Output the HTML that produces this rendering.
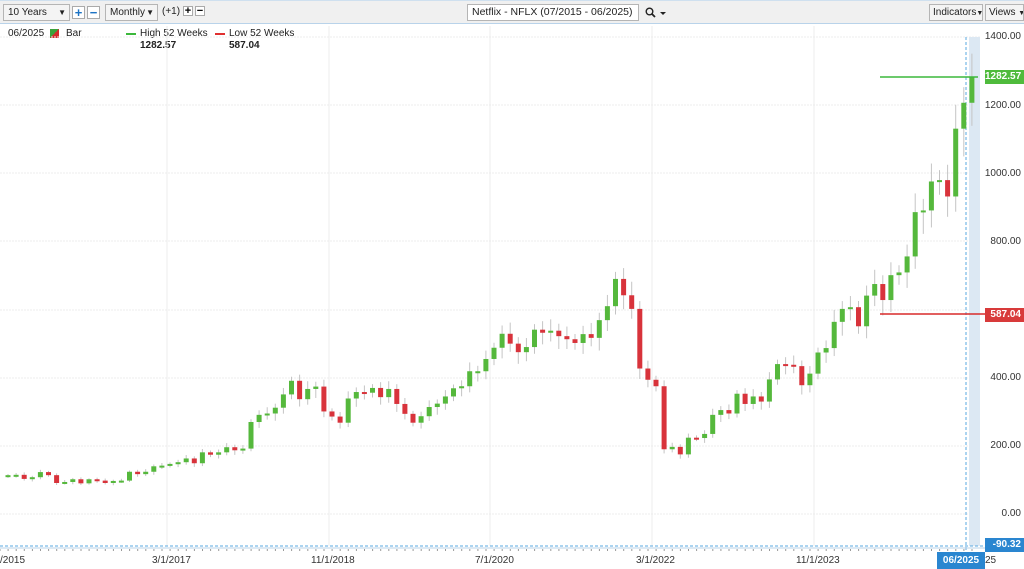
<!DOCTYPE html>
<html><head><meta charset="utf-8"><style>
body{margin:0;width:1024px;height:569px;overflow:hidden;background:#fff;font-family:"Liberation Sans",sans-serif;font-size:10px;color:#222;position:relative}
div{white-space:nowrap}
.tb{position:absolute;left:0;top:0;width:1024px;height:24px;background:#f0f0f0;border-bottom:1px solid #b9d3ea;border-top:1px solid #cfe0ef;box-sizing:border-box}
.box{position:absolute;top:3px;height:17px;border:1px solid #b5b5b5;background:#f4f4f4;box-sizing:border-box;line-height:15px;padding-left:4px;font-size:10px;overflow:hidden}
.btn{position:absolute;top:5px;width:13px;height:13px;border:1px solid #aaa;background:#fff;box-sizing:border-box;color:#1c73c4;font-weight:bold;text-align:center;line-height:11px;font-size:13px}
.lbl{position:absolute;right:3px;font-size:10px;color:#333}
.tag{position:absolute;left:985px;width:39px;height:14px;color:#fff;font-weight:bold;font-size:10px;text-align:right;line-height:14px;box-sizing:border-box;padding-right:3px}
.xl{position:absolute;top:555px;font-size:10px;color:#333}
</style></head><body>
<div class="tb">
<div class="box" style="left:3px;width:67px">10 Years<span style="position:absolute;right:3px;font-size:8px">▼</span></div>
<div class="btn" style="left:72px">+</div><div class="btn" style="left:87px">−</div>
<div class="box" style="left:105px;width:53px">Monthly<span style="position:absolute;right:3px;font-size:8px">▼</span></div>
<div style="position:absolute;left:162px;top:5px">(+1)</div>
<div class="btn" style="left:183px;width:10px;height:10px;color:#000;line-height:8px;font-size:11px">+</div>
<div class="btn" style="left:195px;width:10px;height:10px;color:#000;line-height:8px;font-size:11px">−</div>
<div class="box" style="left:467px;top:3px;width:172px;background:#fff;font-size:10.5px">Netflix - NFLX (07/2015 - 06/2025)</div>
<svg style="position:absolute;left:645px;top:6px" width="22" height="12"><circle cx="4.5" cy="4.5" r="3.3" fill="none" stroke="#222" stroke-width="1.4"/><line x1="7" y1="7" x2="10" y2="10" stroke="#222" stroke-width="1.8"/><path d="M15 5h6l-3 3z" fill="#222"/></svg>
<div class="box" style="left:929px;width:54px;padding-left:3px">Indicators<span style="font-size:7px">▼</span></div>
<div class="box" style="left:985px;width:39px;padding-left:3px">Views <span style="font-size:7px">▼</span></div>
</div>
<div style="position:absolute;left:8px;top:28px">06/2025</div>
<div style="position:absolute;left:50px;top:29px;width:9px;height:9px;background:linear-gradient(135deg,#3aa23a 50%,#d42a2a 50%)"></div>
<div style="position:absolute;left:66px;top:28px">Bar</div>
<div style="position:absolute;left:126px;top:33px;width:10px;height:2px;background:#3cb83c"></div>
<div style="position:absolute;left:140px;top:28px">High 52 Weeks</div>
<div style="position:absolute;left:140px;top:40px;font-weight:bold">1282.57</div>
<div style="position:absolute;left:215px;top:33px;width:10px;height:2px;background:#e03030"></div>
<div style="position:absolute;left:229px;top:28px">Low 52 Weeks</div>
<div style="position:absolute;left:229px;top:40px;font-weight:bold">587.04</div>
<svg id="c" width="1024" height="569" style="position:absolute;left:0;top:0"></svg>
<div class="lbl" style="top:31px">1400.00</div>
<div class="lbl" style="top:100px">1200.00</div>
<div class="lbl" style="top:168px">1000.00</div>
<div class="lbl" style="top:236px">800.00</div>
<div class="lbl" style="top:372px">400.00</div>
<div class="lbl" style="top:440px">200.00</div>
<div class="lbl" style="top:508px">0.00</div>
<div class="tag" style="top:70px;background:#4fbb3c">1282.57</div>
<div class="tag" style="top:308px;background:#d83a3a">587.04</div>
<div class="tag" style="top:538px;background:#2a86d0">-90.32</div>
<div class="xl" style="left:0">/2015</div>
<div class="xl" style="left:152px">3/1/2017</div>
<div class="xl" style="left:311px">11/1/2018</div>
<div class="xl" style="left:475px">7/1/2020</div>
<div class="xl" style="left:636px">3/1/2022</div>
<div class="xl" style="left:796px">11/1/2023</div>
<div class="xl" style="left:985px">25</div>
<div style="position:absolute;left:937px;top:552px;width:48px;height:17px;background:#2a86d0;color:#fff;font-weight:bold;font-size:10px;line-height:17px;text-align:center">06/2025</div>
<script>
var C=[114,115,103,108,123,114,91,94,102,90,102,98,91,97,98,124,117,124,140,142,147,152,163,149,181,174,181,196,187,192,270,291,295,312,351,391,337,367,374,301,286,268,339,358,356,370,343,367,323,294,268,287,314,324,345,369,375,419,419,455,488,529,500,475,490,541,532,538,522,513,502,528,517,569,610,690,642,602,427,394,375,190,197,175,224,223,235,291,305,295,353,323,345,330,395,440,438,434,378,412,474,487,564,602,607,551,641,675,628,701,709,756,886,891,976,980,932,1131,1207,1282];
var s='';
function y(v){return 514-v*0.3407}
[37,105,173,241,310,378,446,514].forEach(function(g){s+='<line x1="0" x2="980" y1="'+g+'" y2="'+g+'" stroke="#ececec" stroke-dasharray="2,1"/>'});
[167,329,490,652,814].forEach(function(g){s+='<line x1="'+g+'" x2="'+g+'" y1="26" y2="546" stroke="#ececec"/>'});
s+='<rect x="969" y="37" width="11" height="509" fill="#dce8f3"/>';
s+='<line x1="966" x2="966" y1="37" y2="552" stroke="#5aa8e0" stroke-dasharray="3,2"/>';
s+='<line x1="0" x2="985" y1="546" y2="546" stroke="#5aa8e0" stroke-dasharray="3,2"/>';
s+='<line x1="0" x2="985" y1="548" y2="548" stroke="#b9d3ea"/>';
for(var i=0;i<C.length;i++){var o=i?C[i-1]:110,c=C[i],x=8+8.1*i;var hi=Math.max(o,c)*(1.03+0.04*((i*7)%5)/5),lo=Math.min(o,c)*(0.96-0.04*((i*3)%5)/5);
s+='<line x1="'+x+'" x2="'+x+'" y1="'+y(hi)+'" y2="'+y(lo)+'" stroke="#c4c4c4"/>';
var t=y(Math.max(o,c)),h=Math.max(2,Math.abs(y(o)-y(c)));
s+='<rect x="'+(x-2.5)+'" y="'+t+'" width="5" height="'+h+'" fill="'+(c>=o?'#55b83c':'#d8333b')+'"/>';}
s+='<line x1="880" x2="978" y1="77" y2="77" stroke="#3cb83c" stroke-width="1.5"/>';
s+='<line x1="880" x2="985" y1="314" y2="314" stroke="#d82a2a" stroke-width="1.5"/>';
for(var k=0;k<980;k+=8.1)s+='<line x1="'+k+'" x2="'+k+'" y1="549" y2="551" stroke="#999"/>';
document.getElementById('c').innerHTML=s;
</script>
</body></html>
